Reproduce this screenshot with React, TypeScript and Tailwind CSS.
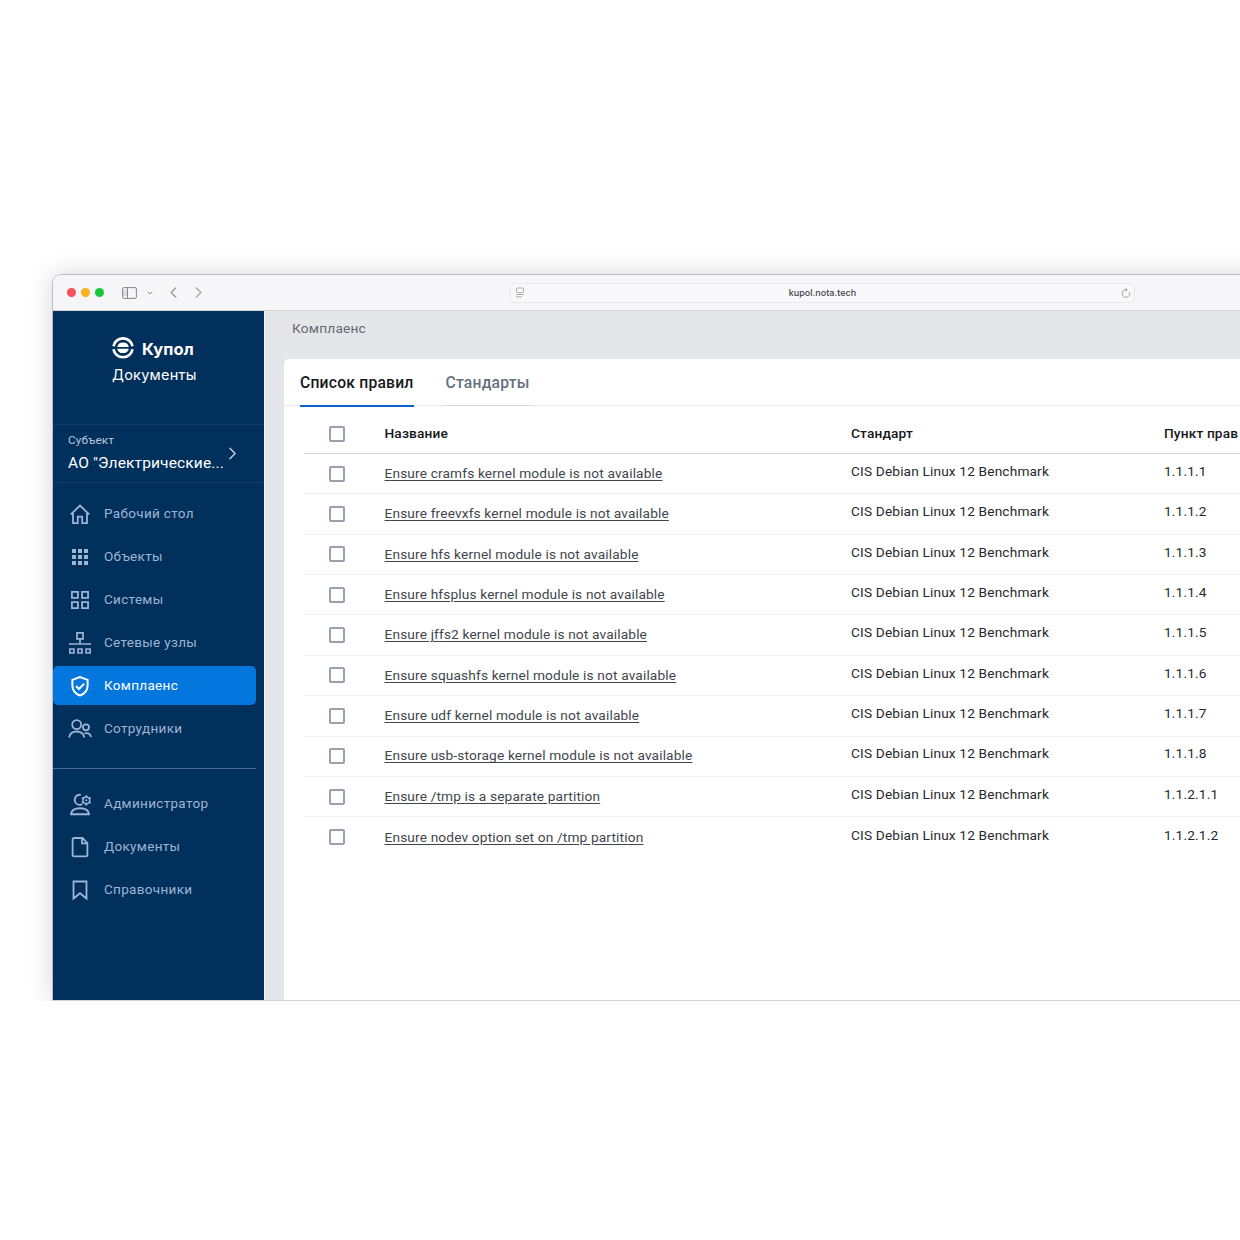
import React from "react";
import { ChevronDown, ChevronLeft, ChevronRight } from "lucide-react";

type IconProps = { children: React.ReactNode; strokeWidth?: number };

const NavIcon = ({ children, strokeWidth = 1.8 }: IconProps) => (
  <svg
    width="24"
    height="24"
    viewBox="0 0 24 24"
    fill="none"
    stroke="currentColor"
    strokeWidth={strokeWidth}
    className="shrink-0"
  >
    {children}
  </svg>
);

const mainNav = [
  {
    label: "Рабочий стол",
    icon: (
      <NavIcon>
        <path d="M2.8 12.3 12 3.6l9.2 8.7M5 10.8v10.3h4.8v-6.4h4.4v6.4H19V10.8" />
      </NavIcon>
    ),
  },
  {
    label: "Объекты",
    icon: (
      <NavIcon>
        <path
          d="M4 4h4v4H4zM10 4h4v4h-4zM16 4h4v4h-4zM4 10h4v4H4zM10 10h4v4h-4zM16 10h4v4h-4zM4 16h4v4H4zM10 16h4v4h-4zM16 16h4v4h-4z"
          fill="currentColor"
          stroke="none"
        />
      </NavIcon>
    ),
  },
  {
    label: "Системы",
    icon: (
      <NavIcon>
        <path d="M3.900 3.900h6v6h-6zM14.100 3.900h6v6h-6zM3.900 14.100h6v6h-6zM14.100 14.100h6v6h-6z" />
      </NavIcon>
    ),
  },
  {
    label: "Сетевые узлы",
    icon: (
      <NavIcon strokeWidth={1.7}>
        <path d="M9 1.800h6v6H9zM12 8v5M1 13h22M1.900 18h4v4h-4zM10 18h4v4h-4zM18.100 18h4v4h-4z" />
      </NavIcon>
    ),
  },
  {
    label: "Комплаенс",
    active: true,
    icon: (
      <NavIcon strokeWidth={2}>
        <path d="M12 3 4.400 5.900v5.600c0 4.600 3 8.300 7.600 10 4.600-1.700 7.600-5.400 7.600-10V5.900z" />
        <path d="m8 12 3 3 5.200-5.400" />
      </NavIcon>
    ),
  },
  {
    label: "Сотрудники",
    icon: (
      <NavIcon>
        <circle cx="8.700" cy="7.600" r="4.500" />
        <circle cx="18" cy="10.300" r="3" />
        <path d="M1 20.500c.8-3.800 4-6 7.700-6s6.900 2.200 7.700 6M16.500 16.400c3.200-.7 5.800.8 6.600 3.600" />
      </NavIcon>
    ),
  },
];

const adminNav = [
  {
    label: "Администратор",
    icon: (
      <NavIcon strokeWidth={1.9}>
        <path d="M12.800 2.800C9.300 2.300 6.700 4.700 6.700 7.700c0 2.900 2.200 5.200 5.200 5.200 1 0 1.700-.2 2.400-.6" />
        <path d="M3 22.200c.4-3.800 4-6 9-6s8.600 2.200 9 6z" />
        <g transform="translate(18.300 8.300)">
          <circle r="3.400" strokeWidth="1.500" />
          <circle r="1.100" fill="currentColor" stroke="none" />
          <path
            d="M0-5.100v2M0 3.100v2M-4.400-2.600l1.700 1M2.700 1.600l1.700 1M-4.400 2.600l1.700-1M2.700-1.600l1.700-1"
            strokeWidth="1.800"
          />
        </g>
      </NavIcon>
    ),
  },
  {
    label: "Документы",
    icon: (
      <NavIcon>
        <path d="M14.500 3H6.200C5.300 3 4.600 3.700 4.600 4.600v15.200c0 .9.700 1.600 1.600 1.600h11.600c.9 0 1.600-.7 1.600-1.600V8zM14 3.200v5.100h5.200" />
      </NavIcon>
    ),
  },
  {
    label: "Справочники",
    icon: (
      <NavIcon>
        <path d="M5.500 3.500h13v17L12 15.200l-6.500 5.300z" />
      </NavIcon>
    ),
  },
];

const rules = [
  { name: "Ensure cramfs kernel module is not available", point: "1.1.1.1" },
  { name: "Ensure freevxfs kernel module is not available", point: "1.1.1.2" },
  { name: "Ensure hfs kernel module is not available", point: "1.1.1.3" },
  { name: "Ensure hfsplus kernel module is not available", point: "1.1.1.4" },
  { name: "Ensure jffs2 kernel module is not available", point: "1.1.1.5" },
  { name: "Ensure squashfs kernel module is not available", point: "1.1.1.6" },
  { name: "Ensure udf kernel module is not available", point: "1.1.1.7" },
  { name: "Ensure usb-storage kernel module is not available", point: "1.1.1.8" },
  { name: "Ensure /tmp is a separate partition", point: "1.1.2.1.1" },
  { name: "Ensure nodev option set on /tmp partition", point: "1.1.2.1.2" },
];

const NavItem = ({ item }: { item: { label: string; icon: React.ReactNode; active?: boolean } }) => (
  <div
    className={
      item.active
        ? "flex items-center h-[39px] w-[203px] pl-[15px] gap-3 rounded-[5px] bg-[#0477df] text-white"
        : "flex items-center h-[39px] w-[203px] pl-[15px] gap-3 text-[#9db4d3]"
    }
  >
    {item.icon}
    <span className="pb-[1px] text-[13.500px] tracking-[0.320px] whitespace-nowrap">{item.label}</span>
  </div>
);

const BrowserBar = () => (
  <div className="flex items-center h-[36px] bg-[#f6f6f9] border-b border-[#d3d4d8] shrink-0">
    <div className="flex gap-[5px] pl-[14px] w-[69px]">
      <span className="size-[9px] rounded-full bg-[#f94f55]" />
      <span className="size-[9px] rounded-full bg-[#f8b021]" />
      <span className="size-[9px] rounded-full bg-[#1cc63c]" />
    </div>
    <svg width="15" height="12" viewBox="0 0 15 12" fill="none" stroke="#858589">
      <path d="M1 3h4v6H1z" fill="#dcdce0" stroke="none" />
      <rect x=".6" y=".6" width="13.800" height="10.800" rx="1.500" />
      <path d="M5.500.600v10.800" />
    </svg>
    <ChevronDown className="ml-[9px] size-[8px] text-[#8a8a8e]" strokeWidth={3} />
    <ChevronLeft className="ml-[10px] size-[19px] text-[#929296]" strokeWidth={1.400} />
    <ChevronRight className="ml-[6px] size-[19px] text-[#a0a0a4]" strokeWidth={1.400} />
    <div className="flex items-center justify-between ml-[302px] w-[625px] h-[20px] pl-[5px] pr-[3px] rounded-[5px] border border-[#e9e9ec] bg-[#f8f8fa]">
      <svg width="8" height="11" viewBox="0 0 8 11" fill="none" stroke="#98989c" strokeWidth=".8">
        <rect x=".5" y="1" width="7" height="4.500" rx="1" />
        <path d="M0 7.500h8M0 9.800h6" />
      </svg>
      <span className="text-[9px] font-medium tracking-[0.02px] text-[#414145] font-['Inter',sans-serif]">
        kupol.nota.tech
      </span>
      <svg width="10" height="10" viewBox="0 0 10 10" fill="none" stroke="#98989c" strokeWidth=".9">
        <path d="M8.600 4.300A3.800 3.800 0 1 1 5 1.700h.9M4.500.2l1.600 1.500-1.600 1.600" />
      </svg>
    </div>
  </div>
);

const Sidebar = () => (
  <aside className="flex flex-col w-[211px] bg-[#01305c] shrink-0">
    <div className="flex flex-col pl-[59px] pt-[25px] h-[113px] text-white font-['Inter',sans-serif]">
      <div className="flex items-center gap-[8px] h-[24px]">
        <svg width="22" height="22" viewBox="0 0 22 22" fill="none">
          <path
            d="M1.500 9.300a9.600 9.300 0 0 1 19 0M1.500 12.300a9.600 9.300 0 0 0 19 0"
            stroke="#fff"
            strokeWidth="2.700"
          />
          <path d="M5.200 9.900a5.900 5.400 0 0 1 11.600 0zM5.200 11.700a5.900 5.400 0 0 0 11.600 0z" fill="#fff" />
        </svg>
        <span className="font-bold text-[16.500px] leading-[26px] pt-[1px] tracking-[0.1px]">Купол</span>
      </div>
      <span className="text-[14.500px] leading-[22px] mt-[4px] tracking-[0.250px]">Документы</span>
    </div>
    <div className="flex justify-between border-y border-[#0e3d69] h-[59px] pl-[15px] pr-[27px]">
      <div className="flex flex-col pt-[7px]">
        <span className="text-[11.700px] leading-[16px] tracking-[0.150px] text-[#b9cadf]">Субъект</span>
        <span className="text-[15.500px] leading-[22px] mt-[4px] tracking-[0.150px] text-white whitespace-nowrap">
          АО "Электрические...
        </span>
      </div>
      <ChevronRight className="mt-[18px] -mx-[6px] size-[21px] shrink-0 text-[#d5dfec]" strokeWidth={1.400} />
    </div>
    <nav className="flex flex-col gap-1 pt-[11px] pb-[20px]">
      {mainNav.map((item) => (
        <NavItem key={item.label} item={item} />
      ))}
    </nav>
    <div className="w-[203px] border-t border-[#426a94]" />
    <nav className="flex flex-col gap-1 pt-[15px]">
      {adminNav.map((item) => (
        <NavItem key={item.label} item={item} />
      ))}
    </nav>
  </aside>
);

const Checkbox = () => (
  <span className="block size-[16px] rounded-[2px] border-2 border-[#9a9fb0] bg-white" />
);

const RulesTable = () => (
  <div className="ml-[20px] w-[1000px] text-[13.700px] tracking-[0.150px] text-[#26292d]">
    <div className="grid grid-cols-[80.500px_466.500px_313px_140px] items-center h-[48px] pt-[8px] border-b border-[#d2d4d9] font-medium text-[#16181b]">
      <div className="pl-[24.500px]">
        <Checkbox />
      </div>
      <span>Название</span>
      <span>Стандарт</span>
      <span>Пункт прав</span>
    </div>
    {rules.map((rule) => (
      <div
        key={rule.point}
        className="grid grid-cols-[80.500px_466.500px_313px_140px] items-center h-[40.360px] border-b border-[#eff0f2] last:border-b-0"
      >
        <div className="pl-[24.500px]">
          <Checkbox />
        </div>
        <a className="pb-[1px] underline underline-offset-2 text-[#41464c]">{rule.name}</a>
        <span className="pb-[5px]">CIS Debian Linux 12 Benchmark</span>
        <span className="pb-[5px]">{rule.point}</span>
      </div>
    ))}
  </div>
);

const App = () => {
  return (
    <div className="w-[1240px] h-[1240px] bg-white overflow-hidden font-['Roboto',sans-serif]">
      <div className="h-[1001px] pt-[274px] pl-[52px] overflow-hidden">
        <div className="flex flex-col w-[1300px] h-[727px] rounded-tl-[9px] border border-[#bcbec1] border-b-[#d2d3d6] overflow-hidden shadow-[0_0_26px_rgba(0,0,0,0.16)]">
          <BrowserBar />
          <div className="flex flex-1 min-h-0">
            <Sidebar />
            <main className="flex flex-col flex-1 bg-[#e4e6ea] border-l border-[#f4f5f7]">
              <div className="pl-[27px] pt-[7px] h-[48px] text-[13.700px] leading-[20px] tracking-[0.2px] text-[#656b75]">
                Комплаенс
              </div>
              <div className="ml-[19px] flex-1 rounded-tl-[5px] bg-white">
                <div className="flex gap-[32px] pl-[16px] h-[47px] border-b border-[#e8e9ec] text-[15.700px] leading-[48px] font-medium tracking-[0.2px]">
                  <span className="h-[48px] border-b-2 border-[#0b63cb] text-[#16181b]">Список правил</span>
                  <span className="h-[47px] border-b border-[#d3d5d9] text-[#68707b]">Стандарты</span>
                </div>
                <RulesTable />
              </div>
            </main>
          </div>
        </div>
      </div>
    </div>
  );
};

export default App;
